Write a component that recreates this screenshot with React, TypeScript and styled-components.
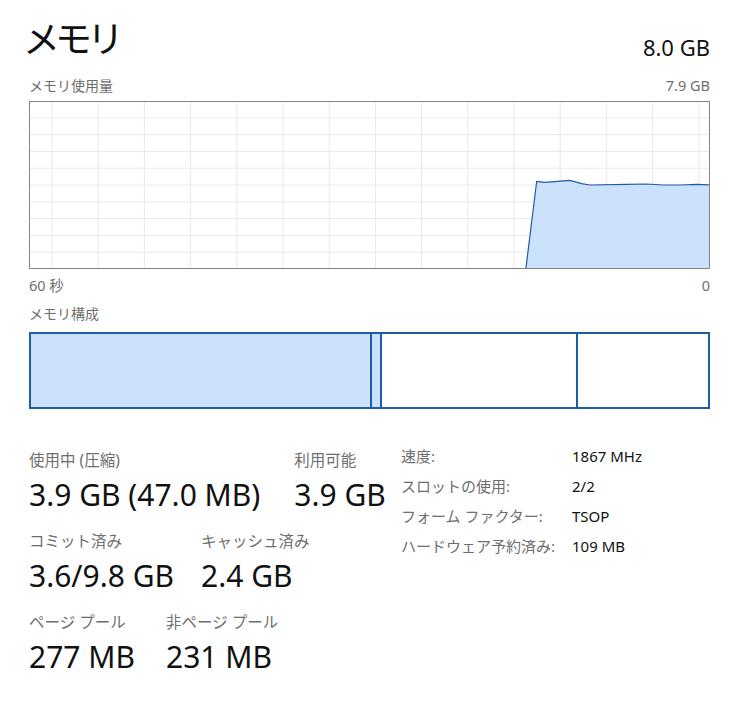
import styled, { createGlobalStyle } from 'styled-components';

const GlobalStyle = createGlobalStyle`
  html, body {
    margin: 0;
    padding: 0;
    background: #ffffff;
  }
  body {
    font-family: "Noto Sans", "Noto Sans CJK JP", sans-serif;
    color: #1a1a1a;
  }
`;

const Page = styled.div`
  width: 746px;
  height: 705px;
  box-sizing: border-box;
  padding: 8px 36px 0 29px;
  overflow: hidden;
`;

const Header = styled.div`
  display: flex;
  justify-content: space-between;
  align-items: flex-end;
  height: 56px;
`;

const Title = styled.h1`
  margin: 0 0 0 -6px;
  font-family: "Noto Sans CJK JP", sans-serif;
  font-size: 37px;
  font-weight: 400;
  letter-spacing: -5px;
  line-height: 53px;
  color: #111;
`;

const Total = styled.div`
  font-size: 22px;
  line-height: 28px;
  margin-bottom: 3px;
  color: #111;
`;

const LabelRow = styled.div<{ $top: number }>`
  display: flex;
  justify-content: space-between;
  align-items: baseline;
  margin-top: ${(p) => p.$top}px;
  font-size: 14px;
  line-height: 18px;
  color: #6e6e6e;
`;

const SmallNum = styled.span`
  font-size: 14.5px;
  color: #6e6e6e;
`;

const GraphBox = styled.div`
  height: 168px;
  border: 1px solid #858585;
  box-sizing: border-box;
  margin-top: 6px;
  background: #fff;

  svg {
    display: block;
    width: 100%;
    height: 100%;
  }
`;

const CompositionBar = styled.div`
  display: flex;
  height: 77px;
  margin-top: 9px;
  border: 2px solid #1f5ca8;
  box-sizing: border-box;
`;

const Segment = styled.div<{ $w: number; $filled?: boolean; $last?: boolean }>`
  flex: 0 0 ${(p) => p.$w}px;
  background: ${(p) => (p.$filled ? '#cce1fb' : '#ffffff')};
  border-right: ${(p) => (p.$last ? 'none' : '2px solid #1f5ca8')};
  box-sizing: border-box;
`;

const Stats = styled.div`
  display: flex;
  margin-top: 36px;
`;

const LeftStats = styled.div`
  width: 372px;
  padding-top: 4px;
  display: flex;
  flex-direction: column;
  gap: 15px;
`;

const StatRow = styled.div<{ $gap: number }>`
  display: flex;
  gap: ${(p) => p.$gap}px;
`;

const Stat = styled.div`
  display: flex;
  flex-direction: column;
`;

const StatLabel = styled.div`
  font-size: 15.5px;
  line-height: 22px;
  color: #6e6e6e;
`;

const StatValue = styled.div`
  margin-top: 4px;
  font-size: 30px;
  line-height: 40px;
  color: #111;
`;

const InfoGrid = styled.div`
  display: grid;
  grid-template-columns: 171px auto;
  grid-auto-rows: 30px;
  font-size: 15px;
`;

const InfoLabel = styled.div`
  color: #6e6e6e;
  line-height: 22px;
`;

const InfoValue = styled.div`
  color: #111;
  line-height: 22px;
`;

const W = 679;
const H = 166;

const points: [number, number][] = [
  [495.7, 168],
  [506.7, 79.3],
  [515, 80.3],
  [540, 78.3],
  [551.7, 81.7],
  [560, 83],
  [596.7, 82.3],
  [616.7, 82],
  [633, 83],
  [650, 83],
  [666.7, 82.3],
  [680, 83],
];

const UsageGraph = () => {
  const vLines = Array.from({ length: 15 }, (_, i) => 22 + i * 46.2);
  const hLines = Array.from({ length: 9 }, (_, i) => (i + 1) * 16.8 - 1);
  const line = points.map(([x, y], i) => `${i ? 'L' : 'M'}${x} ${y}`).join(' ');
  const area = `${line} L${W} ${H + 1} L${points[0][0]} ${H + 1} Z`;
  return (
    <svg viewBox={`0 0 ${W} ${H}`} preserveAspectRatio="none">
      {vLines.map((x) => (
        <line key={`v${x}`} x1={x} y1={0} x2={x} y2={H} stroke="#e8e8e8" strokeWidth={1} />
      ))}
      {hLines.map((y) => (
        <line key={`h${y}`} x1={0} y1={y} x2={W} y2={y} stroke="#e8e8e8" strokeWidth={1} />
      ))}
      <path d={area} fill="#cce1fb" />
      <path d={line} fill="none" stroke="#1f5ca8" strokeWidth={1.2} />
    </svg>
  );
};

const info = [
  ['速度:', '1867 MHz'],
  ['スロットの使用:', '2/2'],
  ['フォーム ファクター:', 'TSOP'],
  ['ハードウェア予約済み:', '109 MB'],
];

export default function App() {
  return (
    <Page>
      <GlobalStyle />
      <Header>
        <Title>メモリ</Title>
        <Total>8.0 GB</Total>
      </Header>
      <LabelRow $top={12}>
        <span>メモリ使用量</span>
        <SmallNum>7.9 GB</SmallNum>
      </LabelRow>
      <GraphBox>
        <UsageGraph />
      </GraphBox>
      <LabelRow $top={7}>
        <SmallNum>60 秒</SmallNum>
        <SmallNum>0</SmallNum>
      </LabelRow>
      <LabelRow $top={11}>
        <span>メモリ構成</span>
      </LabelRow>
      <CompositionBar>
        <Segment $w={341} $filled />
        <Segment $w={10} $filled />
        <Segment $w={196} />
        <Segment $w={130} $last />
      </CompositionBar>
      <Stats>
        <LeftStats>
          <StatRow $gap={34}>
            <Stat>
              <StatLabel>使用中 (圧縮)</StatLabel>
              <StatValue>3.9 GB (47.0 MB)</StatValue>
            </Stat>
            <Stat>
              <StatLabel>利用可能</StatLabel>
              <StatValue>3.9 GB</StatValue>
            </Stat>
          </StatRow>
          <StatRow $gap={27}>
            <Stat>
              <StatLabel>コミット済み</StatLabel>
              <StatValue>3.6/9.8 GB</StatValue>
            </Stat>
            <Stat>
              <StatLabel>キャッシュ済み</StatLabel>
              <StatValue>2.4 GB</StatValue>
            </Stat>
          </StatRow>
          <StatRow $gap={31}>
            <Stat>
              <StatLabel>ページ プール</StatLabel>
              <StatValue>277 MB</StatValue>
            </Stat>
            <Stat>
              <StatLabel>非ページ プール</StatLabel>
              <StatValue>231 MB</StatValue>
            </Stat>
          </StatRow>
        </LeftStats>
        <InfoGrid>
          {info.map(([k, v]) => (
            <>
              <InfoLabel key={k}>{k}</InfoLabel>
              <InfoValue key={v}>{v}</InfoValue>
            </>
          ))}
        </InfoGrid>
      </Stats>
    </Page>
  );
}
